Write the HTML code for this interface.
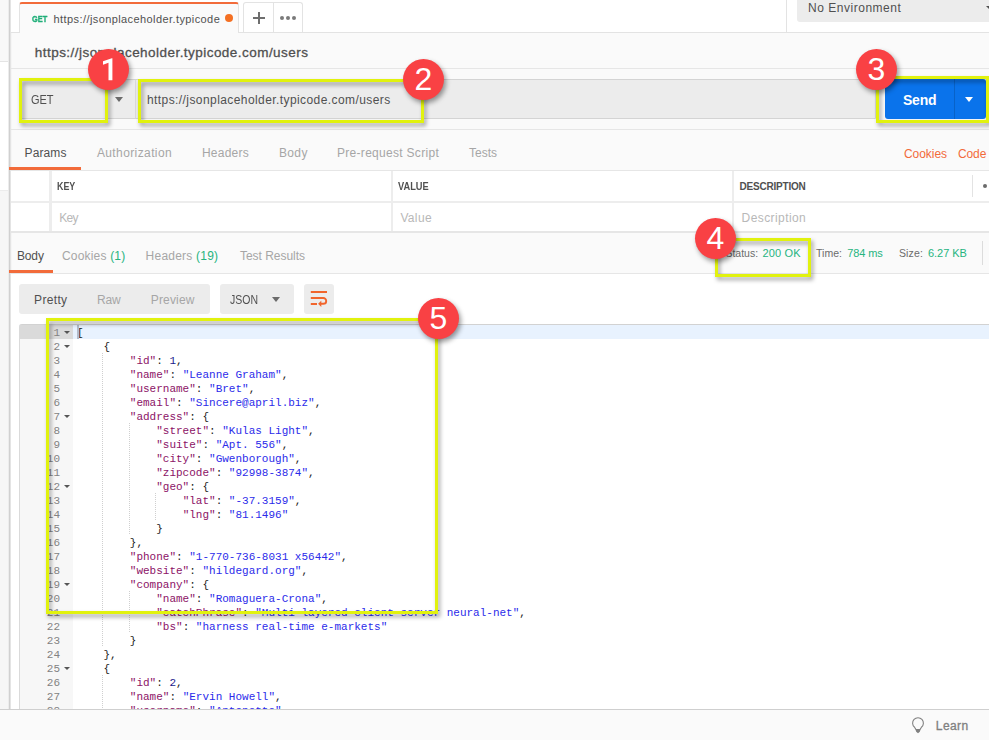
<!DOCTYPE html>
<html>
<head>
<meta charset="utf-8">
<title>Postman</title>
<style>
html,body{margin:0;padding:0;}
body{width:989px;height:740px;overflow:hidden;position:relative;background:#fafafa;font-family:"Liberation Sans",sans-serif;font-size:12px;color:#505050;}
.a{position:absolute;}
.t{position:absolute;white-space:nowrap;line-height:1;}
.hl{position:absolute;height:1px;background:#e6e6e6;}
.vl{position:absolute;width:1px;background:#e6e6e6;}
/* annotations */
.yb{position:absolute;box-sizing:border-box;border:3px solid #e1f20e;filter:drop-shadow(2px 3px 2px rgba(0,0,0,.38));}
.cir{position:absolute;width:41px;height:41px;border-radius:50%;background:#f94144;box-shadow:2px 3px 5px rgba(0,0,0,.4);color:#fff;font-size:32px;line-height:40px;text-align:center;}
/* code */
#code{position:absolute;left:19px;top:324px;width:970px;height:385px;background:#fff;overflow:hidden;border-top-left-radius:3px;}
#gut{position:absolute;left:0;top:0;width:54px;height:100%;background:#f7f7f7;border-left:1px solid #dadada;box-sizing:border-box;}
.ln{position:absolute;left:0;height:14px;width:970px;font-family:"Liberation Mono",monospace;font-size:11px;line-height:14px;white-space:pre;color:#222;}
.ln i{position:absolute;left:0;top:1px;width:41px;text-align:right;font-style:normal;color:#828282;}
.ln b{position:absolute;left:58px;top:1px;font-weight:normal;}
.l1{background:#e8f2fe;}
.l1:before{content:"";position:absolute;left:0;top:0;width:54px;height:14px;background:#dadada;}
.l1:after{content:"";position:absolute;left:58px;top:0;width:2px;height:14px;background:#b3bccb;}
.g{position:absolute;width:1px;background:repeating-linear-gradient(#cfcfcf 0,#cfcfcf 1px,transparent 1px,transparent 2px);}
.k{color:#8c1266;}
.s{color:#2b2bea;}
.n{color:#1a1a8c;}
.fa{position:absolute;left:45px;top:6px;width:0;height:0;border-left:3px solid transparent;border-right:3px solid transparent;border-top:3.500px solid #555;}
</style>
</head>
<body>
<!-- left strip -->
<div class="a" style="left:0;top:0;width:9px;height:61px;background:#f8f8f8;"></div>
<div class="a" style="left:0;top:61px;width:9px;height:129px;background:#fff;"></div>
<div class="a" style="left:0;top:190px;width:9px;height:519px;background:#f6f6f6;"></div>
<div class="hl" style="left:0;top:61px;width:9px;background:#e4e4e4;"></div>
<div class="hl" style="left:0;top:190px;width:9px;background:#ececec;"></div>
<div class="a" style="left:8px;top:0;width:1px;height:709px;background:#ececec;"></div>
<div class="a" style="left:9px;top:0;width:1px;height:709px;background:#d0d0d0;"></div>
<div class="a" style="left:10px;top:0;width:1px;height:709px;background:#e4e4e4;"></div>
<div class="a" style="left:11px;top:0;width:1px;height:709px;background:#f5f5f5;"></div>

<!-- tab bar -->
<div class="a" style="left:11px;top:0;width:978px;height:32px;background:#fff;"></div>
<div class="hl" style="left:10px;top:32px;width:10px;background:#e3e3e3;z-index:2;"></div>
<div class="hl" style="left:238px;top:32px;width:751px;background:#e3e3e3;"></div>
<div class="a" style="left:19px;top:2px;width:220px;height:31px;background:#fafafa;border:1px solid #e3e3e3;border-bottom:none;border-top:2px solid #f26b3a;border-radius:3px 3px 0 0;box-sizing:border-box;"></div>
<div class="t x" style="left:32px;top:15px;font-size:9px;font-weight:bold;color:#1fae78;-webkit-text-stroke:0.35px #1fae78;transform:scaleX(0.82);transform-origin:0 0;">GET</div>
<div class="t" style="left:53.60px;top:14px;font-size:11px;color:#505050;letter-spacing:0.409px;">https://jsonplaceholder.typicode</div>
<div class="a" style="left:225px;top:14px;width:8px;height:8px;border-radius:50%;background:#f47023;"></div>
<div class="a" style="left:243px;top:2px;width:60px;height:30px;border:1px solid #e3e3e3;border-bottom:none;border-radius:3px 3px 0 0;box-sizing:border-box;background:#fff;"></div>
<div class="vl" style="left:273px;top:3px;height:29px;background:#e3e3e3;"></div>
<div class="a" style="left:253px;top:17px;width:12px;height:1.500px;background:#6e6e6e;"></div>
<div class="a" style="left:258.200px;top:11.800px;width:1.500px;height:12px;background:#6e6e6e;"></div>
<div class="a" style="left:280px;top:16px;width:4px;height:4px;border-radius:50%;background:#7a7a7a;"></div>
<div class="a" style="left:286px;top:16px;width:4px;height:4px;border-radius:50%;background:#7a7a7a;"></div>
<div class="a" style="left:292px;top:16px;width:4px;height:4px;border-radius:50%;background:#7a7a7a;"></div>
<div class="vl" style="left:786px;top:0;height:32px;background:#e3e3e3;"></div>
<div class="a" style="left:797px;top:-4px;width:200px;height:26px;background:#ececec;border-radius:3px;"></div>
<div class="t" style="left:808.00px;top:1.7px;font-size:12px;color:#505050;letter-spacing:0.523px;">No Environment</div>

<div class="a" style="left:986px;top:6px;width:0;height:0;border-left:4px solid transparent;border-right:4px solid transparent;border-top:4px solid #505050;"></div>
<!-- request name -->
<div class="t" style="left:34.80px;top:46px;font-size:13.5px;color:#505050;-webkit-text-stroke:0.3px #505050;letter-spacing:0.457px;">https://jsonplaceholder.typicode.com/users</div>
<div class="hl" style="left:11px;top:68px;width:978px;"></div>

<!-- url bar -->
<div class="a" style="left:19px;top:79px;width:857px;height:40px;background:#ececec;border:1px solid #d4d4d4;box-sizing:border-box;border-radius:3px 0 0 3px;"></div>
<div class="vl" style="left:135px;top:80px;height:38px;background:#d9d9d9;"></div>
<div class="t x" style="left:30.6px;top:94px;font-size:12px;color:#505050;transform:scaleX(0.915);transform-origin:0 0;">GET</div>
<div class="a" style="left:115px;top:97px;width:0;height:0;border-left:4px solid transparent;border-right:4px solid transparent;border-top:5px solid #6b6b6b;"></div>
<div class="t" style="left:147.00px;top:94px;font-size:12px;color:#505050;letter-spacing:0.417px;">https://jsonplaceholder.typicode.com/users</div>
<div class="a" style="left:885px;top:79px;width:101px;height:40px;background:#0a73eb;border-radius:3px;"></div>
<div class="vl" style="left:954px;top:79px;height:40px;background:#0862c8;"></div>
<div class="t" style="left:903.00px;top:93px;font-size:14px;font-weight:bold;color:#fff;letter-spacing:-0.225px;">Send</div>
<div class="a" style="left:965px;top:97px;width:0;height:0;border-left:4px solid transparent;border-right:4px solid transparent;border-top:5px solid #fff;"></div>
<div class="hl" style="left:11px;top:129px;width:978px;"></div>

<!-- request tabs -->
<div class="t" style="left:24.50px;top:147px;color:#505050;letter-spacing:0.131px;">Params</div>
<div class="t" style="left:96.90px;top:147px;color:#a6a6a6;letter-spacing:0.394px;">Authorization</div>
<div class="t" style="left:201.90px;top:147px;color:#a6a6a6;letter-spacing:0.257px;">Headers</div>
<div class="t" style="left:278.90px;top:147px;color:#a6a6a6;letter-spacing:0.399px;">Body</div>
<div class="t" style="left:337.00px;top:147px;color:#a6a6a6;letter-spacing:0.295px;">Pre-request Script</div>
<div class="t" style="left:469.00px;top:147px;color:#a6a6a6;letter-spacing:-0.002px;">Tests</div>
<div class="t" style="left:904.00px;top:148px;color:#f26b3a;letter-spacing:-0.059px;">Cookies</div>
<div class="t" style="left:957.90px;top:148px;color:#f26b3a;letter-spacing:-0.065px;">Code</div>
<div class="a" style="left:9px;top:167px;width:72px;height:3px;background:#f26b3a;"></div>
<div class="hl" style="left:11px;top:170px;width:978px;"></div>

<!-- params table -->
<div class="a" style="left:11px;top:171px;width:978px;height:60px;background:#fff;"></div>
<div class="a" style="left:11px;top:201px;width:978px;height:2px;background:#ededed;"></div>
<div class="a" style="left:49px;top:171px;width:2.500px;height:60px;background:#ededed;"></div>
<div class="a" style="left:391px;top:171px;width:2px;height:60px;background:#ededed;"></div>
<div class="a" style="left:732px;top:171px;width:2px;height:60px;background:#ededed;"></div>
<div class="vl" style="left:972px;top:175px;height:22px;background:#e3e3e3;"></div>
<div class="t x" style="left:57px;top:182px;font-size:10px;font-weight:bold;color:#505050;transform:scaleX(0.89);transform-origin:0 0;">KEY</div>
<div class="t x" style="left:398.4px;top:182px;font-size:10px;font-weight:bold;color:#505050;transform:scaleX(0.925);transform-origin:0 0;">VALUE</div>
<div class="t" style="left:739.60px;top:182px;font-size:10px;font-weight:bold;color:#505050;letter-spacing:-0.220px;">DESCRIPTION</div>
<div class="a" style="left:983px;top:184px;width:4px;height:4px;border-radius:50%;background:#6b6b6b;"></div>
<div class="t" style="left:59.20px;top:212px;color:#b8b8b8;letter-spacing:-0.649px;">Key</div>
<div class="t" style="left:400.40px;top:212px;color:#b8b8b8;letter-spacing:0.348px;">Value</div>
<div class="t" style="left:741.60px;top:212px;color:#b8b8b8;letter-spacing:0.415px;">Description</div>
<div class="a" style="left:11px;top:231px;width:978px;height:1.500px;background:#e6e6e6;"></div>

<!-- response area -->
<div class="a" style="left:11px;top:274px;width:978px;height:435px;background:#fff;"></div>
<div class="t" style="left:16.90px;top:250px;color:#505050;letter-spacing:-0.097px;">Body</div>
<div class="t" style="left:62.00px;top:250px;color:#a6a6a6;letter-spacing:0.178px;">Cookies <span style="color:#26b47f">(1)</span></div>
<div class="t" style="left:145.60px;top:250px;color:#a6a6a6;letter-spacing:0.224px;">Headers <span style="color:#26b47f">(19)</span></div>
<div class="t" style="left:240.00px;top:250px;color:#a6a6a6;letter-spacing:-0.032px;">Test Results</div>
<div class="a" style="left:9px;top:270px;width:44px;height:3px;background:#f26b3a;"></div>
<div class="hl" style="left:11px;top:273px;width:978px;"></div>
<div class="t" style="left:725.43px;top:248px;font-size:10.5px;color:#6b6b6b;letter-spacing:0.000px;">Status:</div>
<div class="t" style="left:762.60px;top:248px;font-size:11px;color:#26b47f;letter-spacing:0.139px;">200 OK</div>
<div class="t" style="left:816.00px;top:248px;font-size:10.5px;color:#6b6b6b;letter-spacing:0.012px;">Time:</div>
<div class="t" style="left:847.20px;top:248px;font-size:11px;color:#26b47f;letter-spacing:-0.086px;">784 ms</div>
<div class="t" style="left:898.90px;top:248px;font-size:10.5px;color:#6b6b6b;letter-spacing:0.171px;">Size:</div>
<div class="t" style="left:928.00px;top:248px;font-size:11px;color:#26b47f;letter-spacing:-0.030px;">6.27 KB</div>
<div class="vl" style="left:982px;top:241px;height:24px;background:#dcdcdc;"></div>

<!-- view toolbar -->
<div class="a" style="left:19px;top:284px;width:191px;height:30px;background:#ececec;border-radius:3px;"></div>
<div class="t" style="left:34.10px;top:293.5px;color:#505050;letter-spacing:0.330px;">Pretty</div>
<div class="t" style="left:97.00px;top:293.5px;color:#a6a6a6;letter-spacing:-0.220px;">Raw</div>
<div class="t" style="left:150.80px;top:293.5px;color:#a6a6a6;letter-spacing:0.151px;">Preview</div>
<div class="a" style="left:220px;top:284px;width:74px;height:30px;background:#ececec;border-radius:3px;"></div>
<div class="t x" style="left:229.6px;top:293.5px;font-size:12px;color:#505050;transform:scaleX(0.875);transform-origin:0 0;">JSON</div>
<div class="a" style="left:272px;top:297px;width:0;height:0;border-left:4px solid transparent;border-right:4px solid transparent;border-top:5px solid #6b6b6b;"></div>
<div class="a" style="left:304px;top:284px;width:30px;height:30px;background:#ececec;border-radius:3px;"></div>
<svg class="a" style="left:304px;top:284px;" width="30" height="30" viewBox="0 0 30 30" fill="none" stroke="#f1652c" stroke-width="1.900"><path d="M6.800 8H23M6.800 14H19.300a2.900 2.900 0 0 1 0 5.800H17M6.800 20H13"/><path d="M14.100 19.800L17.300 16.700V22.900Z" fill="#f1652c" stroke="none"/></svg>

<!-- code -->
<div id="code"><div id="gut"></div><div class="a" style="left:0;top:0;width:970px;height:1px;background:#d2d2d2;"></div><!--LINES-->
<div class="ln l1" style="top:1px"><i>1</i><u class="fa"></u><b>[</b></div>
<div class="ln" style="top:15px"><i>2</i><u class="fa"></u><b>    {</b></div>
<div class="ln" style="top:29px"><i>3</i><b>        <span class="k">&quot;id&quot;</span>: <span class="n">1</span>,</b></div>
<div class="ln" style="top:43px"><i>4</i><b>        <span class="k">&quot;name&quot;</span>: <span class="s">&quot;Leanne Graham&quot;</span>,</b></div>
<div class="ln" style="top:57px"><i>5</i><b>        <span class="k">&quot;username&quot;</span>: <span class="s">&quot;Bret&quot;</span>,</b></div>
<div class="ln" style="top:71px"><i>6</i><b>        <span class="k">&quot;email&quot;</span>: <span class="s">&quot;Sincere@april.biz&quot;</span>,</b></div>
<div class="ln" style="top:85px"><i>7</i><u class="fa"></u><b>        <span class="k">&quot;address&quot;</span>: {</b></div>
<div class="ln" style="top:99px"><i>8</i><b>            <span class="k">&quot;street&quot;</span>: <span class="s">&quot;Kulas Light&quot;</span>,</b></div>
<div class="ln" style="top:113px"><i>9</i><b>            <span class="k">&quot;suite&quot;</span>: <span class="s">&quot;Apt. 556&quot;</span>,</b></div>
<div class="ln" style="top:127px"><i>10</i><b>            <span class="k">&quot;city&quot;</span>: <span class="s">&quot;Gwenborough&quot;</span>,</b></div>
<div class="ln" style="top:141px"><i>11</i><b>            <span class="k">&quot;zipcode&quot;</span>: <span class="s">&quot;92998-3874&quot;</span>,</b></div>
<div class="ln" style="top:155px"><i>12</i><u class="fa"></u><b>            <span class="k">&quot;geo&quot;</span>: {</b></div>
<div class="ln" style="top:169px"><i>13</i><b>                <span class="k">&quot;lat&quot;</span>: <span class="s">&quot;-37.3159&quot;</span>,</b></div>
<div class="ln" style="top:183px"><i>14</i><b>                <span class="k">&quot;lng&quot;</span>: <span class="s">&quot;81.1496&quot;</span></b></div>
<div class="ln" style="top:197px"><i>15</i><b>            }</b></div>
<div class="ln" style="top:211px"><i>16</i><b>        },</b></div>
<div class="ln" style="top:225px"><i>17</i><b>        <span class="k">&quot;phone&quot;</span>: <span class="s">&quot;1-770-736-8031 x56442&quot;</span>,</b></div>
<div class="ln" style="top:239px"><i>18</i><b>        <span class="k">&quot;website&quot;</span>: <span class="s">&quot;hildegard.org&quot;</span>,</b></div>
<div class="ln" style="top:253px"><i>19</i><u class="fa"></u><b>        <span class="k">&quot;company&quot;</span>: {</b></div>
<div class="ln" style="top:267px"><i>20</i><b>            <span class="k">&quot;name&quot;</span>: <span class="s">&quot;Romaguera-Crona&quot;</span>,</b></div>
<div class="ln" style="top:281px"><i>21</i><b>            <span class="k">&quot;catchPhrase&quot;</span>: <span class="s">&quot;Multi-layered client-server neural-net&quot;</span>,</b></div>
<div class="ln" style="top:295px"><i>22</i><b>            <span class="k">&quot;bs&quot;</span>: <span class="s">&quot;harness real-time e-markets&quot;</span></b></div>
<div class="ln" style="top:309px"><i>23</i><b>        }</b></div>
<div class="ln" style="top:323px"><i>24</i><b>    },</b></div>
<div class="ln" style="top:337px"><i>25</i><u class="fa"></u><b>    {</b></div>
<div class="ln" style="top:351px"><i>26</i><b>        <span class="k">&quot;id&quot;</span>: <span class="n">2</span>,</b></div>
<div class="ln" style="top:365px"><i>27</i><b>        <span class="k">&quot;name&quot;</span>: <span class="s">&quot;Ervin Howell&quot;</span>,</b></div>
<div class="ln" style="top:379px"><i>28</i><b>        <span class="k">&quot;username&quot;</span>: <span class="s">&quot;Antonette&quot;</span>,</b></div>
<div class="g" style="left:83px;top:29px;height:294px"></div>
<div class="g" style="left:83px;top:351px;height:42px"></div>
<div class="g" style="left:110px;top:99px;height:112px"></div>
<div class="g" style="left:110px;top:267px;height:42px"></div>
<div class="g" style="left:136px;top:169px;height:28px"></div>
<!--/LINES--></div>

<!-- bottom bar -->
<div class="a" style="left:0;top:709px;width:989px;height:31px;background:#fafafa;border-top:1px solid #cfcfcf;box-sizing:border-box;"></div>
<svg class="a" style="left:910px;top:715px;" width="16" height="20" viewBox="0 0 16 20" fill="none" stroke="#808080" stroke-width="1.100"><path d="M6 14.600L4.600 12.300A5.400 5.400 0 1 1 11.400 12.300L10 14.600Z"/><path d="M5.700 15H10.300L9.800 16.800L8 18.200L6.200 16.800Z" fill="#808080" stroke="none"/></svg>
<div class="t" style="left:935.80px;top:720px;font-size:12px;color:#808080;-webkit-text-stroke:0.3px #808080;letter-spacing:0.418px;">Learn</div>

<!-- annotations -->
<div class="yb" style="left:19px;top:78px;width:89px;height:45px;"></div>
<div class="yb" style="left:138px;top:79px;width:285.500px;height:44px;"></div>
<div class="yb" style="left:876px;top:76px;width:113px;height:47px;"></div>
<div class="yb" style="left:715px;top:238px;width:96px;height:39px;"></div>
<div class="yb" style="left:46px;top:318px;width:392px;height:296px;"></div>
<div class="cir" style="left:88px;top:49px;"><svg class="a" style="left:0;top:0" width="41" height="41" viewBox="0 0 41 41"><path d="M24.4 9.2V31.300H20.500V13.700L15 15.800V12.300L23.800 9.200Z" fill="#fff"/></svg></div>
<div class="cir" style="left:403px;top:59px;">2</div>
<div class="cir" style="left:856px;top:49px;">3</div>
<div class="cir" style="left:695px;top:218px;">4</div>
<div class="cir" style="left:418px;top:298px;">5</div>
</body>
</html>
